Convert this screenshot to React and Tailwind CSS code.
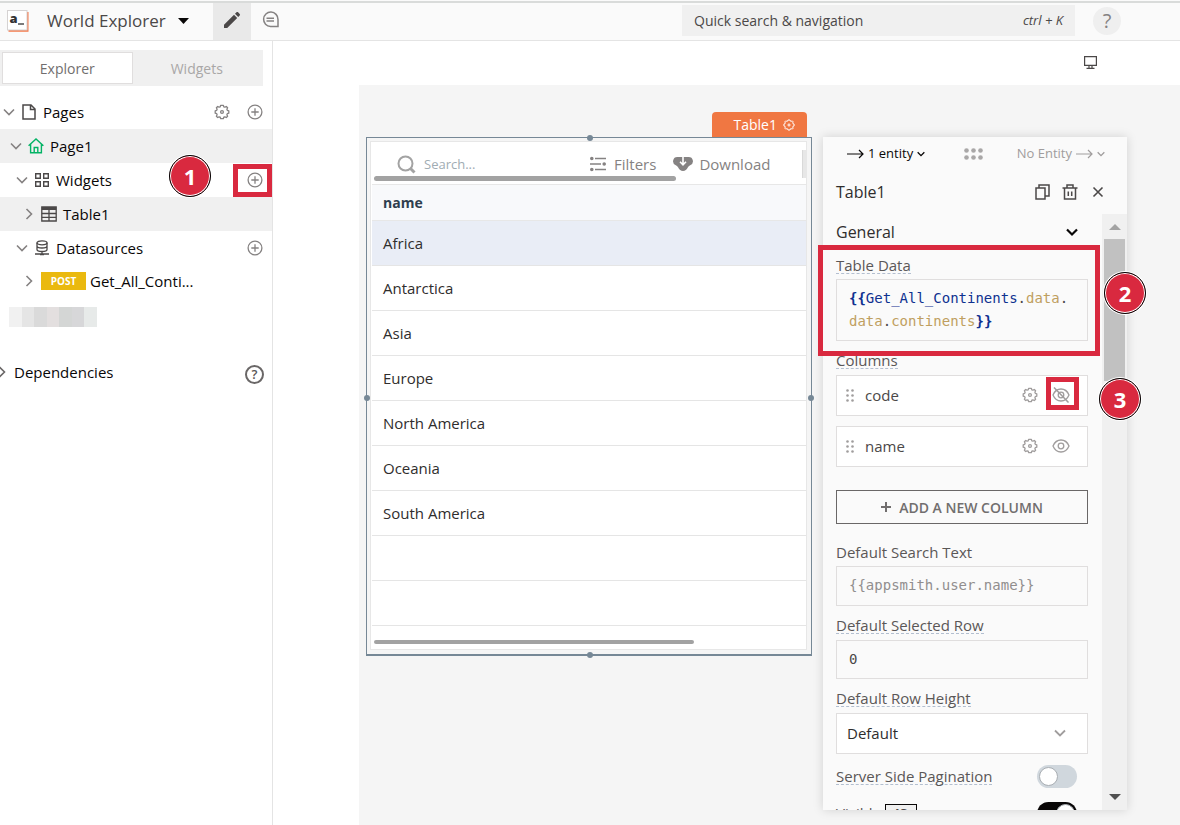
import React from "react";

const ui = "font-['Open_Sans','Noto_Sans',sans-serif]";
const mono = "font-['DejaVu_Sans_Mono',monospace]";

function Chevron({ dir = "down", size = 12, width = 1.6, className = "" }) {
  const d = dir === "down" ? "M1 3.5 L6 8.5 L11 3.5" : "M3.5 1 L8.5 6 L3.5 11";
  return (
    <svg width={size} height={size} viewBox="0 0 12 12" fill="none" stroke="currentColor" strokeWidth={width} className={"shrink-0 " + className}>
      <path d={d} />
    </svg>
  );
}

function Gear({ size = 16, className = "" }) {
  return (
    <svg width={size} height={size} viewBox="0 0 16 16" fill="none" stroke="currentColor" strokeWidth="1.3" strokeLinejoin="round" className={className}>
      <path d="M6.7 1.3h2.6l.5 1.5 1.1.4 1.4-.7 1.3 1.3-.7 1.4.4 1.1 1.500.5v2.4l-1.5.5-.4 1.1.7 1.4-1.3 1.3-1.4-.7-1.1.4-.5 1.5H6.7l-.5-1.5-1.1-.4-1.4.7-1.3-1.3.7-1.4-.4-1.1-1.5-.5V6.8l1.5-.5.4-1.1-.7-1.4 1.3-1.3 1.4.7 1.1-.4z" />
      <circle cx="8" cy="8" r="1.4" />
    </svg>
  );
}

function PlusCircle() {
  return (
    <svg width="16" height="16" viewBox="0 0 16 16" fill="none" stroke="#858282" strokeWidth="1.3">
      <circle cx="8" cy="8" r="6.9" />
      <path d="M8 4.3v7.4M4.3 8h7.4" />
    </svg>
  );
}

function Marker({ n, className }) {
  return (
    <span className={"pointer-events-none absolute z-20 flex size-[42px] items-center justify-center rounded-full border border-black bg-[#d9293f] font-['Noto_Sans',sans-serif] text-[22px] font-bold text-white shadow-[inset_0_0_0_1px_#fff,0_0_0_1px_#fff] " + className}>
      {n}
    </span>
  );
}

function Highlight({ className }) {
  return <span className={"pointer-events-none absolute z-10 border-[#d9293f] " + className} />;
}

function Logo() {
  return (
    <svg width="22" height="22" viewBox="0 0 22 22">
      <path d="M1.5 20v1.800h20V2h-2v18z" fill="#f5794a" />
      <rect x="0.5" y="0.5" width="19.5" height="19.5" fill="#fff" stroke="#d5d2d2" />
      <text x="2.5" y="13" fontFamily="Open Sans, sans-serif" fontSize="13" fontWeight="800" fill="#333">a</text>
      <path d="M11 14h6" stroke="#333" strokeWidth="1.3" />
    </svg>
  );
}

function TopBar() {
  return (
    <header className="flex h-[41px] border-b border-[#e4e4e4] bg-[#fafafa] pt-px">
      <div className="flex w-full items-center border-t-2 border-[#d9dbda]">
        <div className="flex w-[213px] shrink-0 items-center pb-0.5 pl-[7px]">
          <Logo />
          <button className="ml-[18px] flex items-center gap-3 text-[17px] font-medium text-[#4b4848]">
            World Explorer
            <svg width="11" height="6" viewBox="0 0 11 6"><path d="M0 0h11L5.5 6z" fill="#090707" /></svg>
          </button>
        </div>
        <button aria-label="Edit" className="flex h-full w-[38px] shrink-0 items-center justify-center bg-[#e9e9e9] pb-1">
          <svg width="18" height="18" viewBox="0 0 18 18" fill="#4b4848"><path d="M1 13.800 11 3.800 14.200 7 4.200 17H1zM12 2.800l1.500-1.500c.5-.5 1.100-.5 1.600 0l1.600 1.600c.5.5.5 1.100 0 1.600L15.200 6z" /></svg>
        </button>
        <button aria-label="Comments" className="ml-[11px] flex items-center pb-1">
          <svg width="17" height="17" viewBox="0 0 17 17" fill="none" stroke="#858282" strokeWidth="1.5"><path d="M16 8.5V15.500H8.500A7.200 7.200 0 1 1 16 8.500zM4.500 7.200h7.500M4.500 10h7.500" /></svg>
        </button>
        <div className="ml-auto flex items-center pr-[59px] pb-0.5">
          <button className="flex h-[31px] w-[393px] items-center justify-between bg-[#f0f0f0] px-3 text-[14px] text-[#4b4848]">
            <span>Quick search &amp; navigation</span>
            <span className="text-[13px] italic">ctrl + K</span>
          </button>
          <button aria-label="Help" className="ml-[18px] flex size-7 items-center justify-center rounded-full bg-[#efefef] text-[20px] text-[#858282]">?</button>
        </div>
      </div>
    </header>
  );
}

function TreeRow({ pad, open, icon, label, active, children }) {
  return (
    <div className={"relative flex h-[34px] items-center pr-[9px] " + pad + (active ? " bg-[#f0f0f0]" : "")}>
      <button className="flex items-center gap-[3px] text-[15px] text-[#090707]">
        <Chevron dir={open ? "down" : "right"} className="text-[#858282]" />
        <span className="flex w-[22px] shrink-0 justify-center">{icon}</span>
        <span>{label}</span>
      </button>
      <div className="ml-auto flex items-center gap-[17px]">{children}</div>
    </div>
  );
}

function Sidebar() {
  const dark = "#4b4848";
  return (
    <aside className="w-[273px] shrink-0 border-r border-[#e4e4e4] bg-white pt-[9px]">
      <div className="mr-[9px] flex h-9 bg-[#f0f0f0] p-[2px] text-[14px]">
        <button className="flex-1 border border-[#e0dede] bg-white text-[#716e6e]">Explorer</button>
        <button className="flex-1 text-[#a9a7a7]">Widgets</button>
      </div>
      <nav className="mt-[9px]">
        <TreeRow pad="pl-[3px]" open label="Pages" icon={<svg width="14" height="16" viewBox="0 0 14 16" fill="none" stroke={dark} strokeWidth="1.5"><path d="M1 1h8l4 4v10H1zM8.500 1v4.500H13" /></svg>}>
          <button aria-label="Page settings" className="text-[#858282]"><Gear /></button>
          <button aria-label="Add page"><PlusCircle /></button>
        </TreeRow>
        <TreeRow pad="pl-[10px]" open active label="Page1" icon={<svg width="16" height="16" viewBox="0 0 16 16" fill="none" stroke="#03b365" strokeWidth="1.4"><path d="M.6 7.800 8 1l7.400 6.800M2.600 6.200V14.800h10.800V6.200M6.200 14.500V9.500h3.600v5" /></svg>} />
        <TreeRow pad="pl-4" open label="Widgets" icon={<svg width="14" height="14" viewBox="0 0 14 14" fill="none" stroke={dark} strokeWidth="1.4"><path d="M.7.7h4.600v4.600H.7zM8.700.7h4.600v4.600H8.700zM.7 8.700h4.600v4.600H.7zM8.700 8.700h4.600v4.600H8.700z" /></svg>}>
          <button aria-label="Add widget"><PlusCircle /></button>
          <Highlight className="top-px right-0 h-[33px] w-[39px] border-[5px]" />
          <Marker n={1} className="-top-2 right-[61px]" />
        </TreeRow>
        <TreeRow pad="pl-[23px]" active label="Table1" icon={<svg width="16" height="16" viewBox="0 0 16 16" fill="none" stroke={dark} strokeWidth="1.3"><path d="M.8 1h14.400v14H.8z" /><path d="M.8 2.500h14.400" strokeWidth="3" /><path d="M.8 7.500h14.400M.8 11.300h14.400M8 3v12" /></svg>} />
        <TreeRow pad="pl-4" open label="Datasources" icon={<svg width="14" height="16" viewBox="0 0 14 16" fill="none" stroke={dark} strokeWidth="1.3"><ellipse cx="7" cy="2.8" rx="5" ry="2" /><path d="M2 2.800v6.700c0 1.100 2.200 2 5 2s5-.9 5-2V2.800M2 6c0 1.100 2.200 2 5 2s5-.9 5-2M7 11.500v3M0 14h14M5 14.500h4" /></svg>}>
          <button aria-label="Add datasource"><PlusCircle /></button>
        </TreeRow>
        <div className="flex h-8 items-center pl-[23px]">
          <button className="flex items-center text-[15px] text-[#090707]">
            <Chevron dir="right" className="text-[#858282]" />
            <span className="ml-1.5 flex h-[18px] w-[45px] items-center justify-center bg-[#eab90f] text-[10px] font-bold text-white">POST</span>
            <span className="ml-1">Get_All_Conti...</span>
          </button>
        </div>
        <div className="mt-[10px] ml-[9px] flex h-5 w-[88px]">
          <i className="flex-1 bg-[#f1f1f1]" /><i className="flex-1 bg-[#e5e5e5]" /><i className="flex-1 bg-[#dadada]" /><i className="flex-1 bg-[#e3dfdf]" /><i className="flex-1 bg-[#d4d6d5]" /><i className="flex-1 bg-[#d7d7d9]" /><i className="flex-1 bg-[#e7eae9]" />
        </div>
      </nav>
      <div className="mt-[29px] flex h-8 items-center justify-between pr-2">
        <button className="-ml-1 flex items-center gap-1.5 text-[15px] text-[#090707]">
          <Chevron dir="right" className="text-[#6a6767]" />
          Dependencies
        </button>
        <button aria-label="About dependencies" className="mt-1 flex size-[19px] items-center justify-center rounded-full border-2 border-[#6a6767] text-[13px] leading-none font-semibold text-[#5a5757]">?</button>
      </div>
    </aside>
  );
}

const continents = ["Africa", "Antarctica", "Asia", "Europe", "North America", "Oceania", "South America", "", ""];

function Dot({ className }) {
  return <span className={"absolute z-10 size-1.5 rounded-full bg-[#768896] " + className} />;
}

function TableWidget() {
  return (
    <section className="relative w-[446px] shrink-0 self-start border border-b-2 border-[#768896] p-[3px] pr-1 pb-1">
      <div className="absolute right-1 -top-[26px] flex h-[25px] w-[95px] items-center justify-end gap-1.5 rounded-t-sm bg-[#f07742] pr-3 text-[14px] font-medium text-white">
        Table1
        <Gear size={12} />
      </div>
      <Dot className="-top-[3px] left-[220px]" />
      <Dot className="-bottom-1 left-[220px]" />
      <Dot className="top-[257px] -left-[3px]" />
      <Dot className="top-[257px] -right-[3px]" />
      <div className="border border-[#e7e7e7] bg-white pl-px">
        <div className="relative flex h-[42px] items-center overflow-hidden pt-0.5">
          <label className="ml-[25px] flex w-[193px] items-center gap-2">
            <svg width="19" height="19" viewBox="0 0 19 19" fill="none" stroke="#a3a3a3" strokeWidth="2"><circle cx="8.5" cy="8.5" r="7" /><path d="m13.500 13.500 4 4" strokeWidth="3" /></svg>
            <input aria-label="Search" placeholder="Search..." className="w-36 bg-transparent pt-0.5 text-[13px] outline-none placeholder:text-[#a1acb3]" />
          </label>
          <button className="flex items-center gap-2 text-[15px] text-[#858282]">
            <svg width="16" height="16" viewBox="0 0 16 16" fill="#858282" stroke="#858282" strokeWidth="1.6"><circle cx="1.8" cy="2.5" r="1" /><circle cx="1.8" cy="13.5" r="1" /><circle cx="14.2" cy="8" r="1" /><path d="M5 2.500h11M5 13.500h11M0 8h11" /></svg>
            Filters
          </button>
          <button className="ml-[17px] flex items-center gap-1.5 text-[15px] text-[#858282]">
            <svg width="20" height="16" viewBox="0 0 20 16">
              <path d="M4.500 1h11a4.300 4.300 0 0 1 1.700 8.300c-1.200.5-1.700 1.200-2.400 2.300-1.100 2-2.600 3.400-4.800 3.400s-3.700-1.400-4.800-3.400c-.7-1.100-1.200-1.800-2.400-2.300A4.300 4.300 0 0 1 4.500 1z" fill="#858282" />
              <path d="M10 0v8M7 5.800l3 3 3-3" fill="none" stroke="#fff" strokeWidth="1.6" />
            </svg>
            Download
          </button>
          <span className="absolute top-2 right-0 h-7 w-1 border-l border-[#d9d9d9] bg-[#e7e7e7]" />
          <span className="absolute bottom-[3px] left-0.5 h-[5px] w-[302px] rounded-full bg-[#a2a2a2]" />
        </div>
        <table className="w-full border-collapse text-left">
          <thead>
            <tr className="h-9 border-y border-[#e7e7e7] bg-[#f8f9fb]">
              <th className="h-9 px-[11px] py-0 text-[14px] font-bold text-[#2f3e4e]">name</th>
            </tr>
          </thead>
          <tbody>
            {continents.map((c, i) => (
              <tr key={i} className={"h-[45px] border-b border-[#e5e5e5] " + (i === 0 ? "bg-[#e9edf6]" : "")}>
                <td className="px-[11px] py-0 text-[15px] text-[#2f2d2d]">{c}</td>
              </tr>
            ))}
          </tbody>
        </table>
        <div className="flex h-[23px] items-center pt-2 pl-0.5">
          <span className="h-1 w-80 rounded-full bg-[#a2a2a2]" />
        </div>
      </div>
    </section>
  );
}

function Label({ children, plain, htmlFor }) {
  return (
    <label htmlFor={htmlFor} className={"block w-fit border-b text-[15px] leading-4 text-[#5a5757] " + (plain ? "border-transparent" : "border-dashed border-[#b3bfd0]")}>
      {children}
    </label>
  );
}

function Toggle({ on, label, id }) {
  return (
    <span className={"relative flex h-[23px] w-10 shrink-0 items-center rounded-full px-0.5 " + (on ? "justify-end bg-[#090707]" : "bg-[#d0d7dd]")}>
      <span className="size-[19px] rounded-full border border-[#a9aeb3] bg-white" />
      <input id={id} type="checkbox" role="switch" aria-label={label} defaultChecked={on} className="absolute inset-0 opacity-0" />
    </span>
  );
}

function Eye({ off }) {
  return (
    <svg width="18" height="16" viewBox="0 0 18 16" fill="none" stroke="#a09d9d" strokeWidth="1.3">
      <path d="M1 8c1.600-3.800 4.500-6 8-6s6.400 2.200 8 6c-1.600 3.800-4.500 6-8 6s-6.400-2.200-8-6z" />
      <circle cx="9" cy="8" r="2.8" />
      {off && <path d="M2 .5 16.500 15.500" strokeWidth="1.5" />}
    </svg>
  );
}

function ColumnItem({ name, hidden }) {
  return (
    <div className="relative flex h-[41px] items-center border border-[#e0dede] bg-white pr-[17px] pb-px pl-[9px] text-[15px] text-[#4b4848]">
      <svg width="8" height="13" viewBox="0 0 8 13" fill="#a09d9d">
        {[1.5, 6.5, 11.5].map((y) => <React.Fragment key={y}><circle cx="1.5" cy={y} r="1.3" /><circle cx="6.5" cy={y} r="1.3" /></React.Fragment>)}
      </svg>
      <span className="ml-[11px]">{name}</span>
      <button aria-label={"Settings for " + name} className="mr-3.5 ml-auto text-[#a09d9d]"><Gear /></button>
      <button aria-label={"Toggle " + name}><Eye off={hidden} /></button>
      {hidden && <Highlight className="top-px right-2 h-[33px] w-[33px] border-[5px]" />}
    </div>
  );
}

function Arrow() {
  return (
    <svg width="17" height="10" viewBox="0 0 17 10" fill="none" stroke="currentColor" strokeWidth="1.2"><path d="M0 5h16M12 1l4 4-4 4" /></svg>
  );
}

function PropertyPane() {
  return (
    <section className="flex h-[calc(100vh-152px)] w-[304px] shrink-0 flex-col bg-[#fafafa] shadow-[0_0_10px_rgba(0,0,0,0.15)]">
      <div className="flex h-[33px] items-center justify-between pr-[22px] pl-6 text-[13px]">
        <button className="flex items-center gap-1 text-[#090707]"><Arrow />1 entity<Chevron size={8} width={2} /></button>
        <svg width="19" height="12" viewBox="0 0 19 12" fill="#a9a7a7" className="ml-1.5">
          {[2.5, 9.5, 16.5].map((x) => <React.Fragment key={x}><circle cx={x} cy="2.5" r="2.3" /><circle cx={x} cy="9.5" r="2.3" /></React.Fragment>)}
        </svg>
        <button className="flex items-center gap-1 text-[#a09d9d]">No Entity<Arrow /><Chevron size={8} width={2} /></button>
      </div>
      <div className="flex h-11 items-center pr-[23px] pb-px pl-[13px] text-[#4b4848]">
        <h2 className="mr-auto text-[16px] text-[#2f2d2d]">Table1</h2>
        <button aria-label="Copy"><svg width="15" height="16" viewBox="0 0 15 16" fill="none" stroke="currentColor" strokeWidth="1.5"><path d="M1 4h9v11H1zM4 4V1h10v11h-4" /></svg></button>
        <button aria-label="Delete" className="ml-3"><svg width="16" height="16" viewBox="0 0 16 16" fill="none" stroke="currentColor" strokeWidth="1.5"><path d="M.5 4h15M2.500 4v11h11V4M5 4V1h6v3M6.300 7.500v4.500M9.700 7.500v4.500" /></svg></button>
        <button aria-label="Close" className="ml-[14px]"><svg width="12" height="12" viewBox="0 0 12 12" fill="none" stroke="currentColor" strokeWidth="1.6"><path d="m1.500 1.500 9 9M10.500 1.500l-9 9" /></svg></button>
      </div>
      <div className="relative flex min-h-0 flex-1">
        <div className="min-w-0 flex-1 overflow-hidden pr-[14px] pl-[13px]">
          <button className="flex h-9 w-full items-center justify-between pr-2.5 text-[16px] text-[#2f2d2d]">
            General
            <Chevron width={2.2} className="text-[#090707]" />
          </button>
          <div className="pt-[7px]"><Label>Table Data</Label></div>
          <div className={"mt-[5px] h-[62px] border border-[#e0dede] px-3 pt-[7px] text-[14px] leading-[23px] text-[#4b4848] " + mono}>
            <b className="text-[#0f3190]">{"{{"}</b><span className="text-[#0f3190]">Get_All_Continents</span>.<span className="text-[#bf9f60]">data</span>.<br />
            <span className="text-[#bf9f60]">data</span>.<span className="text-[#bf9f60]">continents</span><b className="text-[#0f3190]">{"}}"}</b>
          </div>
          <div className="mt-[11px]"><Label>Columns</Label></div>
          <div className="mt-1.5 flex flex-col gap-2.5">
            <ColumnItem name="code" hidden />
            <ColumnItem name="name" />
          </div>
          <button className="mt-[23px] flex h-[34px] w-full items-center justify-center gap-2 border border-[#6a6767] text-[14px] font-semibold text-[#716e6e]">
            <svg width="10" height="10" viewBox="0 0 10 10" stroke="currentColor" strokeWidth="2"><path d="M5 0v10M0 5h10" /></svg>
            ADD A NEW COLUMN
          </button>
          <div className="mt-5"><Label plain htmlFor="search-text">Default Search Text</Label></div>
          <input id="search-text" placeholder="{{appsmith.user.name}}" className={"mt-[5px] block h-10 w-full border border-[#e0dede] px-3 pb-0.5 text-[14px] placeholder:text-[#918e8e] " + mono} />
          <div className="mt-[11px]"><Label htmlFor="selected-row">Default Selected Row</Label></div>
          <input id="selected-row" defaultValue="0" className={"mt-1.5 block h-[39px] w-full border border-[#e0dede] px-3 pb-0.5 text-[14px] text-[#4b4848] " + mono} />
          <div className="mt-[11px]"><Label htmlFor="row-height">Default Row Height</Label></div>
          <div className="relative mt-1.5">
            <select id="row-height" className="block h-[41px] w-full appearance-none border border-[#e0dede] bg-white px-2.5 text-[15px] text-[#2f2d2d]"><option>Default</option></select>
            <Chevron width={1.8} className="pointer-events-none absolute top-3.5 right-[22px] text-[#a09d9d]" />
          </div>
          <div className="mt-[11px] flex items-center justify-between pr-[11px]"><Label htmlFor="pagination">Server Side Pagination</Label><Toggle id="pagination" label="Server Side Pagination" /></div>
          <div className="mt-3.5 flex items-center pr-[11px]">
            <Label htmlFor="visible">Visible</Label>
            <button aria-label="Toggle JS" className="ml-1 flex h-5 w-8 items-center justify-center border border-[#090707] bg-[#f0f0f0] text-[14px] leading-none font-bold text-[#4b4848]">JS</button>
            <span className="ml-auto"><Toggle id="visible" on label="Visible" /></span>
          </div>
        </div>
        <div className="flex w-[25px] flex-col items-center bg-[#f0f0f0]">
          <span className="flex h-[25px] shrink-0 items-center"><svg width="12" height="6" viewBox="0 0 12 6"><path d="M0 6 6 0l6 6z" fill="#a3a3a3" /></svg></span>
          <span className="h-[142px] w-[21px] bg-[#c1c1c1]" />
          <span className="mt-auto flex h-[26px] shrink-0 items-center"><svg width="12" height="6" viewBox="0 0 12 6"><path d="M0 0 6 6l6-6z" fill="#505050" /></svg></span>
        </div>
        <Highlight className="top-[31px] -left-[5px] h-[111px] w-[282px] border-[5px]" />
        <Marker n={2} className="top-[58px] -right-[19px]" />
        <Marker n={3} className="top-[164px] -right-[14px]" />
      </div>
    </section>
  );
}

export default function App() {
  return (
    <div className={"flex h-screen flex-col overflow-hidden bg-white " + ui}>
      <TopBar />
      <div className="flex min-h-0 flex-1">
        <Sidebar />
        <main className="flex min-w-0 flex-1 flex-col">
          <div className="flex h-11 items-center justify-end pr-[83px] pb-0.5">
            <button aria-label="Desktop layout"><svg width="13" height="13" viewBox="0 0 13 13" fill="none" stroke="#4b4848" strokeWidth="1.2"><path d="M.6.7h11.800v8.600H.6zM5 9.500v2.500M8 9.500v2.500M2.500 12.300h8" /></svg></button>
          </div>
          <div className="ml-[86px] flex flex-1 items-start gap-[11px] bg-[#f5f5f5] pt-[52px] pl-[7px]">
            <TableWidget />
            <PropertyPane />
          </div>
        </main>
      </div>
    </div>
  );
}
